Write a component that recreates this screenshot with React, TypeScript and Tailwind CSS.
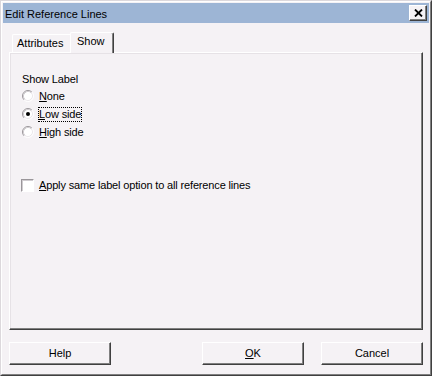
import React from 'react';

const font = { fontFamily: '"Liberation Sans", Arial, sans-serif' };

function Radio({ checked }: { checked?: boolean }) {
  return (
    <svg width="12" height="12" viewBox="0 0 12 12" className="shrink-0">
      <circle cx="6" cy="6" r="5" fill="#ffffff" />
      <path d="M2.11 9.89 A5.5 5.5 0 0 1 9.89 2.11" fill="none" stroke="#9a969a" strokeWidth="1" />
      <path d="M9.89 2.11 A5.5 5.5 0 0 1 2.11 9.89" fill="none" stroke="#ffffff" strokeWidth="1" />
      <path d="M2.82 9.18 A4.5 4.5 0 0 1 9.18 2.82" fill="none" stroke="#d0ccd0" strokeWidth="1" />
      <path d="M9.18 2.82 A4.5 4.5 0 0 1 2.82 9.18" fill="none" stroke="#ece8ec" strokeWidth="1" />
      {checked && <circle cx="6" cy="6" r="2" fill="#000000" />}
    </svg>
  );
}

function Btn({ children }: { children: React.ReactNode }) {
  return (
    <div className="w-[102px] h-[23px] border border-t-white border-l-white border-r-[#404040] border-b-[#404040] shadow-[inset_-1px_-1px_0_#808080] flex items-center justify-center text-[11px] leading-[13px] text-black">
      {children}
    </div>
  );
}

export default function App() {
  return (
    <div style={font} className="w-[432px] h-[376px] bg-[#f5f2f5] border border-t-[#dcd8dc] border-l-[#dcd8dc] border-r-[#404040] border-b-[#404040] text-black">
      <div className="h-full border border-t-white border-l-white border-r-[#808080] border-b-[#808080] p-px flex flex-col">
        {/* Title bar */}
        <div className="h-[20px] bg-[#9db5d5] flex items-start justify-between pl-[2px] pr-[2px]">
          <span className="text-[11px] leading-[13px] pt-[5px]">Edit Reference Lines</span>
          <div className="mt-[2px] w-[18px] h-[16px] bg-[#f5f2f5] border border-t-white border-l-white border-r-[#404040] border-b-[#404040] shadow-[inset_-1px_-1px_0_#808080] flex items-center justify-center">
            <svg width="9" height="8" viewBox="0 0 9 8">
              <path d="M1 0.5 L8 7.5 M8 0.5 L1 7.5" stroke="#000" strokeWidth="1.8" />
            </svg>
          </div>
        </div>

        {/* Body */}
        <div className="px-[6px] pt-[9px]">
          {/* Tabs */}
          <div className="h-[20px] flex items-end pl-[3px]">
            <div className="w-[58px] h-[18px] border-l border-t border-l-white border-t-white rounded-tl-[2px] pl-[4px] pt-[2px] text-[11px] leading-[13px]">
              Attributes
            </div>
            <div className="relative z-10 -mb-px w-[44px] h-[21px] bg-[#f5f2f5] border-l border-t border-r border-l-white border-t-white border-r-[#404040] rounded-t-[2px] shadow-[inset_-1px_0_0_#808080] pl-[6px] pt-[2px] text-[11px] leading-[13px]">
              Show
            </div>
          </div>

          {/* Panel */}
          <div className="h-[278px] border border-t-white border-l-white border-r-[#404040] border-b-[#404040] shadow-[inset_-1px_-1px_0_#808080,inset_1px_1px_0_#e6e2e6] pl-[12px] pt-[20px] text-[11px] leading-[13px] tracking-[-0.15px]">
            <div>Show Label</div>
            <div className="mt-[4px] flex flex-col">
              <div className="h-[18px] flex items-start gap-[4px]">
                <Radio />
                <span className="border border-transparent -mt-px px-0">
                  <span className="underline underline-offset-[1px]">N</span>one
                </span>
              </div>
              <div className="h-[18px] flex items-start gap-[4px]">
                <Radio checked />
                <span className="border border-dotted border-black -mt-px">
                  <span className="underline underline-offset-[1px]">L</span>ow side
                </span>
              </div>
              <div className="h-[18px] flex items-start gap-[4px]">
                <Radio />
                <span className="border border-transparent -mt-px">
                  <span className="underline underline-offset-[1px]">H</span>igh side
                </span>
              </div>
            </div>
            <div className="mt-[35px] -ml-px flex items-start gap-[4px]">
              <div className="w-[13px] h-[13px] bg-white border border-t-[#9a969a] border-l-[#9a969a] border-r-white border-b-white shadow-[inset_1px_1px_0_#d0ccd0]" />
              <span className="pl-px">
                <span className="underline underline-offset-[1px]">A</span>pply same label option to all reference lines
              </span>
            </div>
          </div>

          {/* Buttons */}
          <div className="mt-[12px] flex items-start">
            <Btn>Help</Btn>
            <div className="ml-auto flex gap-[17px]">
              <Btn>
                <span className="underline underline-offset-[1px]">O</span>K
              </Btn>
              <Btn>Cancel</Btn>
            </div>
          </div>
        </div>
      </div>
    </div>
  );
}
